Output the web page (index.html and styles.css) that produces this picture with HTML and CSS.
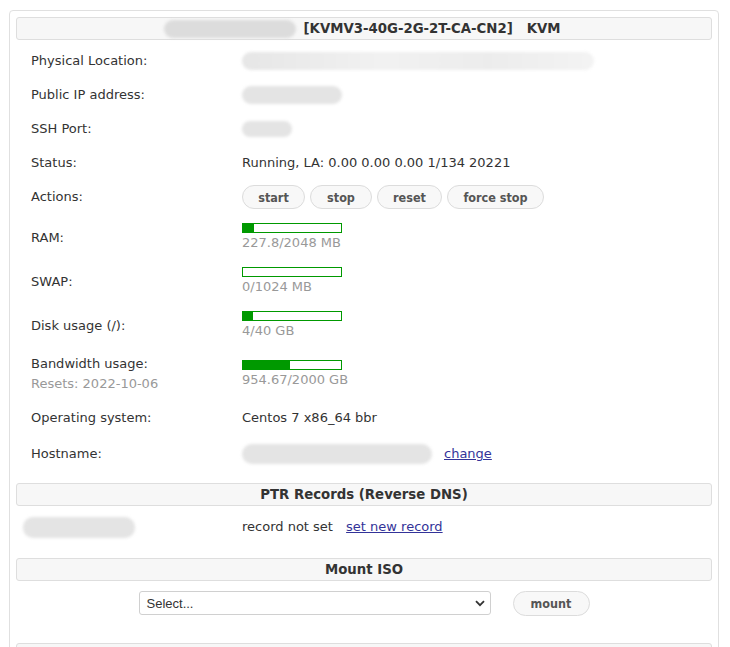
FILE: index.html
```html
<!DOCTYPE html>
<html>
<head>
<meta charset="utf-8">
<link rel="stylesheet" href="styles.css">
</head>
<body>
<div class="panel">
  <div class="head head-title">
    <span class="blur blur-title"></span>
    <span class="title-text">[KVMV3-40G-2G-2T-CA-CN2]&nbsp;&nbsp; KVM</span>
  </div>
  <div class="info">
    <div class="row"><div class="lbl">Physical Location:</div><div class="val"><span class="blur blur-loc"></span></div></div>
    <div class="row"><div class="lbl">Public IP address:</div><div class="val"><span class="blur blur-ip"></span></div></div>
    <div class="row"><div class="lbl">SSH Port:</div><div class="val"><span class="blur blur-ssh"></span></div></div>
    <div class="row"><div class="lbl">Status:</div><div class="val">Running, LA: 0.00 0.00 0.00 1/134 20221</div></div>
    <div class="row row-actions"><div class="lbl">Actions:</div>
      <div class="val buttons">
        <button class="btn">start</button>
        <button class="btn">stop</button>
        <button class="btn">reset</button>
        <button class="btn">force stop</button>
      </div>
    </div>
    <div class="row row-meter"><div class="lbl">RAM:</div>
      <div class="val"><div class="meter"><div class="fill" style="width:11%"></div></div><div class="sub">227.8/2048 MB</div></div>
    </div>
    <div class="row row-meter"><div class="lbl">SWAP:</div>
      <div class="val"><div class="meter"><div class="fill" style="width:0%"></div></div><div class="sub">0/1024 MB</div></div>
    </div>
    <div class="row row-meter"><div class="lbl">Disk usage (/):</div>
      <div class="val"><div class="meter"><div class="fill" style="width:10%"></div></div><div class="sub">4/40 GB</div></div>
    </div>
    <div class="row row-meter row-bw"><div class="lbl lbl-two">Bandwidth usage:<div class="sub resets">Resets: 2022-10-06</div></div>
      <div class="val"><div class="meter"><div class="fill" style="width:48%"></div></div><div class="sub">954.67/2000 GB</div></div>
    </div>
    <div class="row"><div class="lbl">Operating system:</div><div class="val">Centos 7 x86_64 bbr</div></div>
    <div class="row row-host"><div class="lbl">Hostname:</div><div class="val hostval"><span class="blur blur-host"></span><a href="#" class="link">change</a></div></div>
  </div>

  <div class="head">PTR Records (Reverse DNS)</div>
  <div class="ptr">
    <div class="ptr-ip"><span class="blur blur-ptr"></span></div>
    <div class="val">record not set <a href="#" class="link link-gap">set new record</a></div>
  </div>

  <div class="head">Mount ISO</div>
  <div class="iso">
    <div class="select"><span>Select...</span>
      <svg width="10" height="7" viewBox="0 0 10 7"><path d="M1 1.2 L5 5.2 L9 1.2" fill="none" stroke="#333" stroke-width="1.8"/></svg>
    </div>
    <button class="btn btn-mount">mount</button>
  </div>

  <div class="head head-last"></div>
</div>
</body>
</html>
```
FILE: styles.css
```css
html, body {
  margin: 0;
  padding: 0;
  background: #fff;
}
body {
  padding: 10px 11px 0 9px;
  font-family: "DejaVu Sans", sans-serif;
  font-size: 13px;
  color: #333;
  overflow: hidden;
  height: 637px;
}
.panel {
  border: 1px solid #e0e0e0;
  border-radius: 4px;
  padding: 6px 6px 0 6px;
  height: 700px;
}
.head {
  background: #f7f7f7;
  border: 1px solid #dedede;
  border-radius: 3px;
  height: 21px;
  line-height: 21px;
  text-align: center;
  font-weight: bold;
  font-size: 13.3px;
  color: #333;
}
.head-title {
  display: flex;
  justify-content: center;
  align-items: center;
  gap: 8px;
  padding-right: 4px;
}
.title-text {
  white-space: pre;
}
.blur {
  display: block;
  background: #e4e4e4;
  border-radius: 10px;
  filter: blur(1.5px);
}
.blur-title { width: 132px; height: 18px; background: #dcdcdc; }
.blur-loc { width: 352px; height: 18px; background: linear-gradient(90deg, #e6e6e6, #f1f1f1 40%, #ececec 70%, #f3f3f3); }
.blur-ip { width: 100px; height: 18px; }
.blur-ssh { width: 50px; height: 16px; }
.blur-host { width: 190px; height: 20px; }
.blur-ptr { width: 112px; height: 21px; }

.info {
  padding: 4px 0 0 15px;
}
.row {
  display: grid;
  grid-template-columns: 211px 1fr;
  align-items: center;
  padding: 8px 0;
  line-height: 18px;
  min-height: 18px;
}
.row-actions { padding: 6px 0 6px; margin-top: -1px; }
.row-meter { padding: 8px 0 7px; }
.row-bw { padding: 7px 0 7px; }
.row-host { padding: 8px 0 8px; min-height: 22px; }
.lbl { color: #333; }
.lbl-two { line-height: 20px; }
.val { color: #333; }
.buttons {
  display: flex;
  gap: 5px;
}
.btn {
  font-family: "DejaVu Sans Condensed", "DejaVu Sans", sans-serif;
  font-weight: bold;
  font-size: 12.5px;
  color: #555;
  background: #f8f8f8;
  border: 1px solid #dcdcdc;
  border-radius: 13px;
  height: 24px;
  padding: 0;
  cursor: pointer;
}
.buttons .btn:nth-child(1) { width: 63px; }
.buttons .btn:nth-child(2) { width: 62px; }
.buttons .btn:nth-child(3) { width: 65px; }
.buttons .btn:nth-child(4) { width: 97px; }
.meter {
  width: 98px;
  height: 8px;
  border: 1px solid #009900;
  background: #fff;
  margin-bottom: 1px;
}
.fill {
  height: 100%;
  background: #009900;
}
.sub {
  color: #999;
}
.hostval {
  display: flex;
  align-items: center;
  gap: 12px;
}
.link {
  color: #333399;
  text-decoration: underline;
}
.link-gap { margin-left: 9px; }

.info + .head { margin-top: 10px; }
.ptr {
  display: grid;
  grid-template-columns: 219px 1fr;
  align-items: center;
  padding: 7px 0 0 7px;
  height: 28px;
  margin-bottom: 17px;
  line-height: 18px;
}
.ptr-ip { display: flex; }
.iso {
  display: flex;
  justify-content: center;
  align-items: center;
  gap: 22px;
  padding: 10px 0 0 0;
  height: 24px;
  margin-bottom: 28px;
}
.select {
  width: 338px;
  height: 22px;
  border: 1px solid #d0d0d0;
  border-radius: 3px;
  display: flex;
  align-items: center;
  justify-content: space-between;
  padding: 0 5px 0 7px;
  font-family: "Liberation Sans", Arial, sans-serif;
  font-size: 13px;
  color: #333;
  background: #fff;
}
.btn-mount {
  width: 77px;
  height: 25px;
}
.head-last { height: 21px; }
```
